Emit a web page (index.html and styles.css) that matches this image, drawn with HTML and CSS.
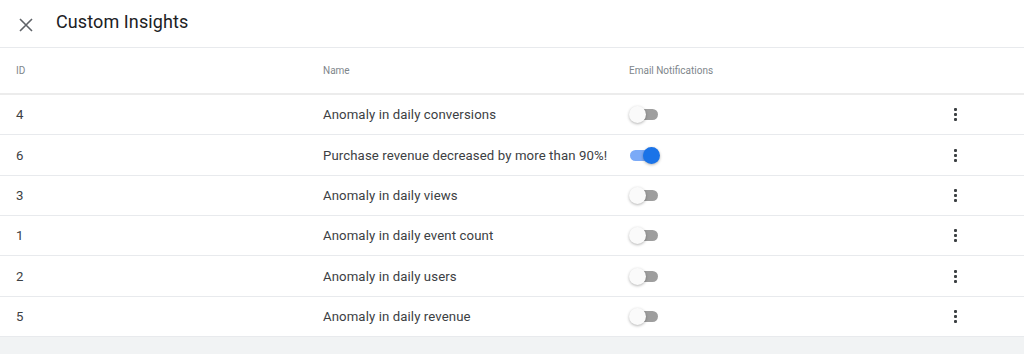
FILE: index.html
```html
<!DOCTYPE html>
<html lang="en">
<head>
    <meta charset="UTF-8">
    <title>Custom Insights</title>
    <link rel="stylesheet" href="styles.css">
</head>
<body>
<!-- Header -->
<div class="dialog-header">
    <button class="close-button" aria-label="Close">
        <svg width="14" height="14" viewBox="0 0 14 14">
            <path d="M1 1 L13 13 M13 1 L1 13" stroke="#5f6368" stroke-width="1.6" fill="none"/>
        </svg>
    </button>
    <div class="dialog-title">Custom Insights</div>
</div>

<!-- Insights table -->
<div class="insights-table">
    <div class="table-row head-row">
        <div class="cell">ID</div>
        <div class="cell">Name</div>
        <div class="cell">Email Notifications</div>
        <div class="cell"></div>
    </div>

    <div class="table-row">
        <div class="cell">4</div>
        <div class="cell">Anomaly in daily conversions</div>
        <div class="cell"><span class="toggle"></span></div>
        <div class="cell menu-cell"><span class="kebab"><i></i><i></i><i></i></span></div>
    </div>
    <div class="table-row">
        <div class="cell">6</div>
        <div class="cell">Purchase revenue decreased by more than 90%!</div>
        <div class="cell"><span class="toggle on"></span></div>
        <div class="cell menu-cell"><span class="kebab"><i></i><i></i><i></i></span></div>
    </div>
    <div class="table-row">
        <div class="cell">3</div>
        <div class="cell">Anomaly in daily views</div>
        <div class="cell"><span class="toggle"></span></div>
        <div class="cell menu-cell"><span class="kebab"><i></i><i></i><i></i></span></div>
    </div>
    <div class="table-row">
        <div class="cell">1</div>
        <div class="cell">Anomaly in daily event count</div>
        <div class="cell"><span class="toggle"></span></div>
        <div class="cell menu-cell"><span class="kebab"><i></i><i></i><i></i></span></div>
    </div>
    <div class="table-row">
        <div class="cell">2</div>
        <div class="cell">Anomaly in daily users</div>
        <div class="cell"><span class="toggle"></span></div>
        <div class="cell menu-cell"><span class="kebab"><i></i><i></i><i></i></span></div>
    </div>
    <div class="table-row">
        <div class="cell">5</div>
        <div class="cell">Anomaly in daily revenue</div>
        <div class="cell"><span class="toggle"></span></div>
        <div class="cell menu-cell"><span class="kebab"><i></i><i></i><i></i></span></div>
    </div>
</div>
</body>
</html>
```

FILE: styles.css
```css
/* General Styles */
body {
    font-family: Roboto, "Liberation Sans", sans-serif;
    background-color: #f1f3f4;
    margin: 0;
    padding: 0;
    color: #3c4043;
}

/* Header */
.dialog-header {
    background-color: #ffffff;
    height: 48px;
    border-bottom: 1px solid #e8eaed;
    display: flex;
    align-items: center;
    box-sizing: border-box;
}

.close-button {
    background: none;
    border: none;
    padding: 0;
    width: 14px;
    height: 14px;
    margin: 2px 0 0 19px;
    display: flex;
}

.dialog-title {
    font-size: 18px;
    color: #202124;
    margin-left: 23px;
    margin-bottom: 4px;
    letter-spacing: 0.1px;
}

/* Table */
.insights-table {
    background-color: #ffffff;
}

.table-row {
    display: grid;
    grid-template-columns: 307px 306px 1fr 48px;
    padding-right: 45px;
    height: 40.35px;
    box-sizing: border-box;
    border-bottom: 1px solid #e8eaed;
    align-items: center;
    font-size: 13.2px;
    letter-spacing: 0.1px;
    white-space: nowrap;
}

.head-row {
    height: 47px;
    border-bottom: 2px solid #ececec;
    font-size: 10px;
    letter-spacing: 0;
    color: #80868b;
    padding-bottom: 1px;
}

.cell {
    padding-left: 16px;
    display: flex;
    align-items: center;
}

.menu-cell {
    padding-left: 0;
    justify-content: center;
}

/* Switch */
.toggle {
    position: relative;
    display: inline-block;
    width: 28px;
    height: 11px;
    border-radius: 6px;
    background-color: #9e9e9e;
    margin-left: 1px;
}

.toggle::after {
    content: "";
    position: absolute;
    top: -3px;
    left: -1px;
    width: 17px;
    height: 17px;
    border-radius: 50%;
    background-color: #fafafa;
    box-shadow: 0 1px 3px rgba(0, 0, 0, 0.3);
}

.toggle.on {
    background-color: #7baaf7;
}

.toggle.on::after {
    left: 13px;
    background-color: #1a73e8;
}

/* Kebab menu */
.kebab {
    display: flex;
    flex-direction: column;
    gap: 2px;
}

.kebab i {
    display: block;
    width: 3px;
    height: 3px;
    border-radius: 1px;
    background-color: #3c4043;
}
```
